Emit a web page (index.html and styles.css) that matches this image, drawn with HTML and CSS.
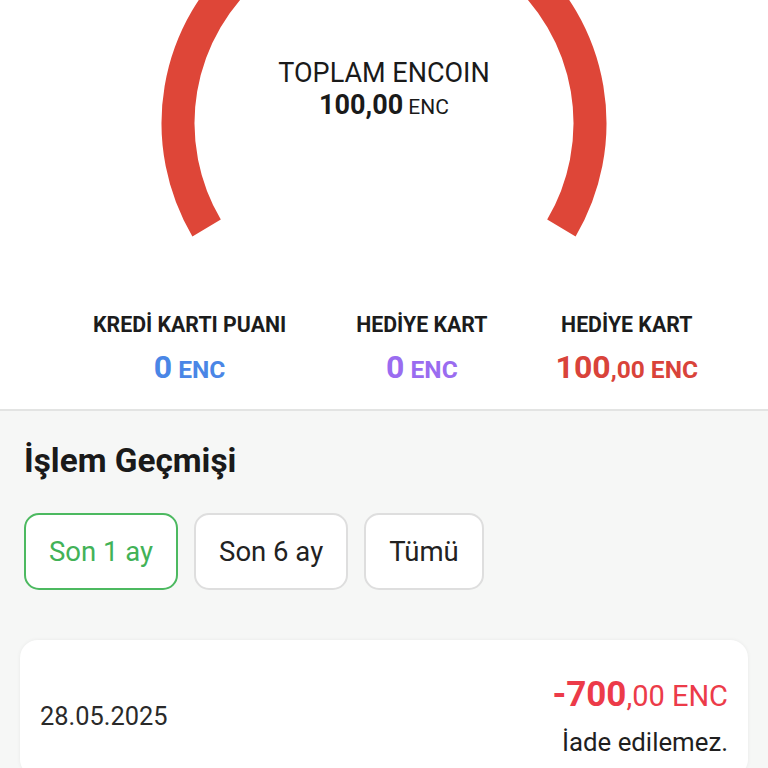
FILE: index.html
```html
<!DOCTYPE html>
<html lang="tr">
<head>
    <meta charset="UTF-8">
    <meta name="viewport" content="width=device-width, initial-scale=1.0">
    <title>Encoin</title>
    <link rel="stylesheet" href="styles.css">
</head>
<body>
    <div class="summary">
        <div class="gauge">
            <svg class="gauge-arc" width="768" height="250" viewBox="0 0 768 250">
                <!-- 240 degree arc, center 384,125 r 206 -->
                <path d="M 206.6 228 A 206 206 0 1 1 561.4 228" fill="none" stroke="#de4638" stroke-width="33"/>
            </svg>
            <div class="gauge-text">
                <div class="gauge-title">TOPLAM ENCOIN</div>
                <div class="gauge-value"><b>100,00</b> ENC</div>
            </div>
        </div>

        <div class="stats">
            <div class="stat">
                <div class="stat-label">KREDİ KARTI PUANI</div>
                <div class="stat-value blue"><span class="big">0</span> ENC</div>
            </div>
            <div class="stat">
                <div class="stat-label">HEDİYE KART</div>
                <div class="stat-value purple"><span class="big">0</span> ENC</div>
            </div>
            <div class="stat">
                <div class="stat-label">HEDİYE KART</div>
                <div class="stat-value red"><span class="big">100</span>,00 ENC</div>
            </div>
        </div>
    </div>

    <div class="history">
        <h2>İşlem Geçmişi</h2>
        <div class="filters">
            <button class="chip active">Son 1 ay</button>
            <button class="chip">Son 6 ay</button>
            <button class="chip">Tümü</button>
        </div>

        <div class="card">
            <div class="card-date">28.05.2025</div>
            <div class="card-right">
                <div class="amount"><b>-700</b>,00 ENC</div>
                <div class="note">İade edilemez.</div>
            </div>
        </div>
    </div>
</body>
</html>
```

FILE: styles.css
```css
body {
    font-family: Roboto, "Noto Sans", sans-serif;
    margin: 0;
    padding: 0;
    background-color: #f6f7f6;
    color: #1c1c1c;
    height: 768px;
    overflow: hidden;
}
.summary {
    background: white;
    border-bottom: 2px solid #e3e4e3;
    height: 409px;
}
.gauge {
    display: grid;
    height: 250px;
}
.gauge > * {
    grid-area: 1 / 1;
}
.gauge-arc {
    display: block;
}
.gauge-text {
    justify-self: center;
    text-align: center;
    padding-top: 57px;
}
.gauge-title {
    font-size: 27px;
    line-height: 32px;
    color: #1a1a1a;
}
.gauge-value {
    font-size: 21px;
    line-height: 32px;
    color: #1a1a1a;
}
.gauge-value b {
    font-size: 27px;
}
.stats {
    display: flex;
    gap: 70px;
    padding: 62px 0 0 93px;
}
.stat {
    text-align: center;
}
.stat:last-child {
    margin-left: -2px;
}
.stat-label {
    font-size: 21.3px;
    font-weight: bold;
    color: #1c1c1c;
    line-height: 26px;
}
.stat-value {
    font-size: 24.5px;
    font-weight: bold;
    margin-top: 10px;
}
.stat-value .big {
    font-size: 32px;
}
.blue {
    color: #4a86e6;
}
.purple {
    color: #9a6cf0;
}
.red {
    color: #d9433a;
}
.history {
    padding: 0 20px;
}
h2 {
    font-size: 33.3px;
    font-weight: bold;
    margin: 0;
    padding: 30px 0 0 4px;
    line-height: 40px;
    color: #1a1a1a;
}
.filters {
    display: flex;
    gap: 16px;
    padding: 32px 0 0 4px;
}
.chip {
    font-family: Roboto, sans-serif;
    font-size: 27.5px;
    height: 77px;
    padding: 0 23px;
    background: white;
    border: 2px solid #dedede;
    border-radius: 15px;
    color: #222;
}
.chip.active {
    border-color: #4cb960;
    color: #42b257;
}
.card {
    margin-top: 50px;
    background: white;
    border-radius: 18px;
    box-shadow: 0 0 4px rgba(0, 0, 0, 0.06);
    padding: 34px 20px 20px 20px;
    display: flex;
    justify-content: space-between;
    align-items: center;
}
.card-date {
    font-size: 25.4px;
    color: #2a2a2a;
}
.card-right {
    text-align: right;
}
.amount {
    font-size: 29px;
    color: #ec3b49;
}
.amount b {
    font-size: 35px;
}
.note {
    font-size: 25.8px;
    color: #1f1f1f;
    margin-top: 12px;
}
```
